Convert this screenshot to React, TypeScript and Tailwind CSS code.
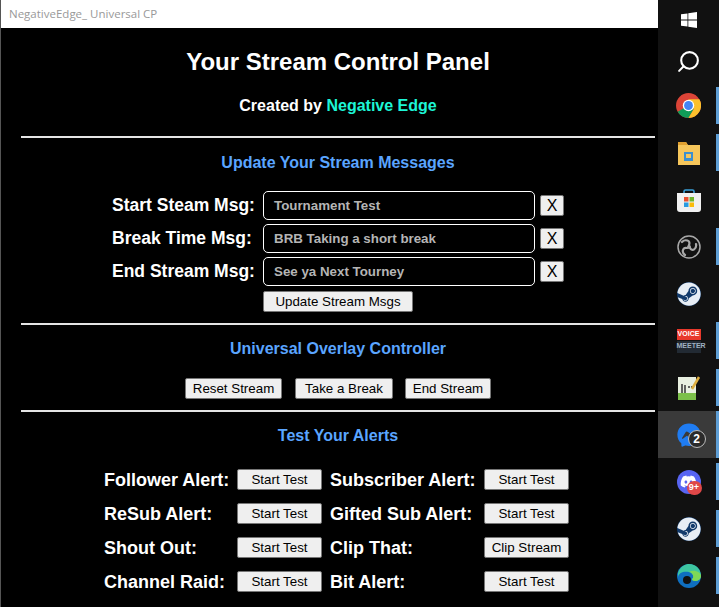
import { Search } from "lucide-react";
import { FaSteam, FaDiscord, FaFacebookMessenger } from "react-icons/fa";

const msgs = [
  { label: "Start Steam Msg:", value: "Tournament Test" },
  { label: "Break Time Msg:", value: "BRB Taking a short break" },
  { label: "End Stream Msg:", value: "See ya Next Tourney" },
];

const alerts = [
  ["Follower Alert:", "Subscriber Alert:", "Start Test"],
  ["ReSub Alert:", "Gifted Sub Alert:", "Start Test"],
  ["Shout Out:", "Clip That:", "Clip Stream"],
  ["Channel Raid:", "Bit Alert:", "Start Test"],
];

function Btn({ children, className = "" }: { children: React.ReactNode; className?: string }) {
  return (
    <button className={`h-[21px] shrink-0 rounded-[2px] border border-[#767676] bg-[#efefef] text-center text-[13.33px] font-normal leading-none text-black ${className}`}>
      {children}
    </button>
  );
}

function Heading({ children }: { children: React.ReactNode }) {
  return <h2 className="text-center text-[16px] font-bold leading-[18px] text-[#5aa5ff]">{children}</h2>;
}

function TaskIcon({ children, active = false, bar = false, className = "h-[47px]" }: { children: React.ReactNode; active?: boolean; bar?: boolean; className?: string }) {
  return (
    <div className={`relative flex w-full items-center justify-center ${className} ${active ? "bg-[#3a3a3a]" : ""}`}>
      {children}
      {bar && <div className={`absolute right-0 w-[3px] bg-[#5f9fd6] ${active ? "inset-y-0" : "inset-y-[5px]"}`} />}
    </div>
  );
}

export default function App() {
  return (
    <div className="flex h-[607px] w-[719px] overflow-hidden bg-black font-['Liberation_Sans',Arial,sans-serif]">
      <div className="flex w-[658px] flex-col border-l border-[#555]">
        <div className="flex h-[28px] shrink-0 items-center bg-white pl-[8px] font-['Open_Sans',sans-serif] text-[11.5px] text-[#999]">
          NegativeEdge_ Universal CP
        </div>
        <div className="flex flex-1 flex-col pl-[20px] pr-[3px] text-white">
          <h1 className="mt-[20px] text-center text-[24px] font-bold leading-[28px]">Your Stream Control Panel</h1>
          <p className="mt-[21px] text-center text-[16px] font-bold leading-[18px]">
            Created by <span className="text-[#1df5d6]">Negative Edge</span>
          </p>
          <hr className="mt-[21px] h-[2px] border-0 bg-[#e5e5e5]" />
          <div className="mt-[16px]">
            <Heading>Update Your Stream Messages</Heading>
          </div>
          <div className="mt-[19px] flex flex-col gap-[4px]">
            {msgs.map((m) => (
              <div key={m.label} className="flex h-[29px] items-center">
                <span className="w-[91px] shrink-0" />
                <span className="w-[151px] shrink-0 text-[17.5px] font-bold leading-none">{m.label}</span>
                <div className="flex h-[29px] w-[272px] items-center rounded-[5px] border border-white pl-[10px] text-[13.33px] font-bold text-[#b5b5b5]">
                  {m.value}
                </div>
                <Btn className="ml-[5px] w-[24px] text-[16px]">X</Btn>
              </div>
            ))}
          </div>
          <div className="mt-[5px] flex pl-[242px]">
            <Btn className="w-[150px]">Update Stream Msgs</Btn>
          </div>
          <hr className="mt-[11px] h-[2px] border-0 bg-[#e5e5e5]" />
          <div className="mt-[15px]">
            <Heading>Universal Overlay Controller</Heading>
          </div>
          <div className="mt-[20px] flex pl-[164px]">
            <Btn className="w-[97px]">Reset Stream</Btn>
            <Btn className="ml-[13px] w-[98px]">Take a Break</Btn>
            <Btn className="ml-[12px] w-[86px]">End Stream</Btn>
          </div>
          <hr className="mt-[11px] h-[2px] border-0 bg-[#e5e5e5]" />
          <div className="mt-[15px]">
            <Heading>Test Your Alerts</Heading>
          </div>
          <div className="mt-[24px] flex flex-col gap-[13px] pl-[83px]">
            {alerts.map(([left, right, action]) => (
              <div key={left} className="flex h-[21px] items-center text-[18px] font-bold leading-none">
                <span className="w-[133px] shrink-0">{left}</span>
                <Btn className="w-[85px]">Start Test</Btn>
                <span className="ml-[8px] w-[154px] shrink-0">{right}</span>
                <Btn className="w-[85px]">{action}</Btn>
              </div>
            ))}
          </div>
        </div>
      </div>

      {/* taskbar */}
      <div className="flex w-[61px] flex-col bg-[#111]">
        <TaskIcon className="h-[40px]">
          <svg width="16" height="16" viewBox="0 0 16 16" fill="#fff">
            <path d="M0 2.3 6.5 1.4V7.6H0ZM7.3 1.3 16 0V7.6H7.3ZM0 8.4H6.5V14.6L0 13.7ZM7.3 8.4H16V16L7.3 14.7Z" />
          </svg>
        </TaskIcon>
        <TaskIcon className="h-[42px]">
          <Search size={25} color="#fff" strokeWidth={2} className="-scale-x-100" />
        </TaskIcon>
        <TaskIcon bar>
          <svg width="25" height="25" viewBox="0 0 48 48">
            <circle cx="24" cy="24" r="24" fill="#db4437" />
            <path d="M24 24 3.2 36A24 24 0 0 0 24 48l10.4-18z" fill="#0f9d58" />
            <path d="M24 12h20.8A24 24 0 0 1 24 48l10.4-18z" fill="#fbc02d" />
            <circle cx="24" cy="24" r="11" fill="#fff" />
            <circle cx="24" cy="24" r="8.5" fill="#4285f4" />
          </svg>
        </TaskIcon>
        <TaskIcon bar>
          <svg width="22" height="24" viewBox="0 0 22 24">
            <path d="M0 1h8l2 3h12v20H0z" fill="#f6c65b" />
            <path d="M0 1h8l1.500 3H0z" fill="#e0a030" />
            <rect x="6" y="11" width="9" height="9" fill="#3b8fd0" />
            <rect x="8" y="13" width="5" height="4" fill="#f6c65b" />
          </svg>
        </TaskIcon>
        <TaskIcon>
          <svg width="24" height="24" viewBox="0 0 24 24">
            <path d="M7 6V3.500Q7 2 8.500 2h7Q17 2 17 3.500V6" fill="none" stroke="#3aa0d8" strokeWidth="1.600" />
            <path d="M0 5h24v16q0 3-3 3H3q-3 0-3-3z" fill="#f1f1f1" />
            <rect x="7" y="9" width="4.500" height="4.500" fill="#e8502f" />
            <rect x="12.500" y="9" width="4.500" height="4.500" fill="#6fb52c" />
            <rect x="7" y="14.500" width="4.500" height="4.500" fill="#2a9be0" />
            <rect x="12.500" y="14.500" width="4.500" height="4.500" fill="#fbbc09" />
          </svg>
        </TaskIcon>
        <TaskIcon bar>
          <svg width="24" height="24" viewBox="0 0 24 24" fill="none" stroke="#a8a8a8">
            <circle cx="12" cy="12" r="11" strokeWidth="1.500" />
            <circle cx="12" cy="12" r="2" fill="#a8a8a8" stroke="none" />
            <path d="M5 7C8 4 14 5 12 10M19 9C20 14 15 17 13 13M8 20C4 17 6 12 10 13" strokeWidth="2.200" strokeLinecap="round" />
          </svg>
        </TaskIcon>
        <TaskIcon>
          <div className="flex h-[24px] w-[24px] items-center justify-center rounded-full bg-[#123a6b]">
            <FaSteam size={24} color="#e8eef5" />
          </div>
        </TaskIcon>
        <TaskIcon bar>
          <div className="flex h-[24px] w-[24px] flex-col text-[7px] font-bold leading-[10px]">
            <div className="h-[11px] bg-[#e8392c] text-center text-white">VOICE</div>
            <div className="mt-[1px] h-[12px] bg-[#222a33] text-center text-[#9fb0c0]">MEETER</div>
          </div>
        </TaskIcon>
        <TaskIcon bar>
          <svg width="24" height="24" viewBox="0 0 24 24">
            <rect x="1" y="1" width="18" height="23" fill="#e8efe0" />
            <rect x="1" y="17" width="18" height="7" fill="#7cc04a" />
            <path d="M5 8v9M8 9v8M11 11h2M14 11h2" stroke="#333" strokeWidth="1.500" />
            <path d="M15 13 22 1" stroke="#e0b040" strokeWidth="2.500" />
          </svg>
        </TaskIcon>
        <TaskIcon active bar>
          <div className="relative h-[24px] w-[24px]">
            <FaFacebookMessenger size={24} color="#1f7cf2" />
            <div className="absolute left-[11px] top-[7px] flex h-[18px] w-[18px] items-center justify-center rounded-full border border-[#bbb] bg-[#2b2b2b] text-[12px] font-bold leading-none text-white">
              2
            </div>
          </div>
        </TaskIcon>
        <TaskIcon bar>
          <div className="relative flex h-[24px] w-[24px] items-center justify-center rounded-full bg-[#5865f2]">
            <FaDiscord size={17} color="#fff" />
            <div className="absolute left-[10px] top-[11px] flex h-[14px] w-[15px] items-center justify-center rounded-full bg-[#e04848] text-[9px] font-bold leading-none text-white">
              9+
            </div>
          </div>
        </TaskIcon>
        <TaskIcon bar>
          <div className="flex h-[24px] w-[24px] items-center justify-center rounded-full bg-[#123a6b]">
            <FaSteam size={24} color="#e8eef5" />
          </div>
        </TaskIcon>
        <TaskIcon bar>
          <svg width="24" height="24" viewBox="0 0 24 24">
            <circle cx="12" cy="12" r="12" fill="#0f6fc0" />
            <path d="M1 9C3 2 9 0 12 0c7 0 12 5 12 12 0 3-3 5-6 5-2 0-3-1-3-2 2-1 2-6-3-7C7 7 2 8 1 13z" fill="#3ec6a0" />
            <path d="M24 12c0 3-3 5-6 5-2 0-3-1-3-2 2-1 2-6-3-7 5-3 12 0 12 4z" fill="#7ed957" />
            <circle cx="10" cy="16" r="4" fill="#111" />
          </svg>
        </TaskIcon>
      </div>
    </div>
  );
}
